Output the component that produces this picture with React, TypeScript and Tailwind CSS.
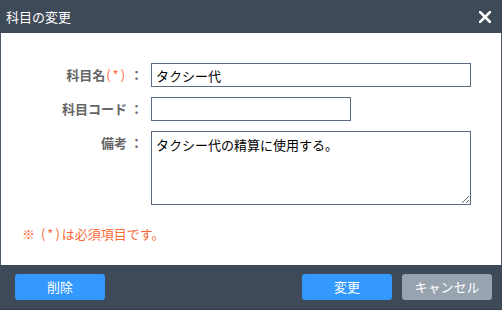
export default function App() {
  const font = { fontFamily: '"Noto Sans CJK JP", "Noto Sans", sans-serif' };
  return (
    <div
      className="flex h-[310px] w-[502px] flex-col bg-white text-[13px]"
      style={font}
    >
      <div className="flex h-[33px] items-center justify-between bg-[#3f4a58] pl-[6px] pr-[10px] text-white">
        <span className="text-[13px] leading-none">科目の変更</span>
        <svg width="12" height="12" viewBox="0 0 12 12" className="mr-[1px]">
          <path d="M1 1L11 11M11 1L1 11" stroke="white" strokeWidth="2.6" strokeLinecap="square" />
        </svg>
      </div>

      <div className="flex h-[232px] flex-col border-x border-[#4f5b69] pt-[30px]">
        <div className="flex h-[24px] items-center">
          <label className="w-[142px] text-right font-bold text-[#666]">
            科目名<span className="pl-[1px] font-normal tracking-[2px] text-[#ff6a3d]">(*)</span> ：
          </label>
          <input
            defaultValue="タクシー代"
            className="ml-[8px] h-[24px] w-[320px] border border-[#5c6b7b] px-[4px] text-[13px] text-black outline-none"
          />
        </div>
        <div className="mt-[10px] flex h-[24px] items-center">
          <label className="w-[142px] text-right font-bold text-[#666]">科目コード ：</label>
          <input className="ml-[8px] h-[24px] w-[200px] border border-[#5c6b7b] px-[4px] text-[13px] outline-none" />
        </div>
        <div className="mt-[10px] flex">
          <label className="mt-[2px] w-[142px] text-right font-bold text-[#666]">備考 ：</label>
          <textarea
            defaultValue="タクシー代の精算に使用する。"
            className="ml-[8px] h-[74px] w-[320px] border border-[#5c6b7b] px-[4px] pt-[3px] text-[13px] leading-[20px] text-black outline-none"
          />
        </div>
        <p className="mt-[19px] pl-[21px] text-[13px] text-[#fa6a38]">
          ※ <span className="pl-[3px] tracking-[2px]">(*)</span>は必須項目です。
        </p>
      </div>

      <div className="flex h-[45px] items-start border-b border-[#333c48] bg-[#3f4a58] pl-[15px] pr-[14px] pt-[9px]">
        <button className="h-[26px] w-[90px] rounded-[3px] bg-[#3399ff] text-[13px] text-white">削除</button>
        <button className="ml-auto h-[26px] w-[90px] rounded-[3px] bg-[#3399ff] text-[13px] text-white">変更</button>
        <button className="ml-[10px] mr-[-4px] h-[26px] w-[90px] rounded-[3px] bg-[#98a3b0] text-[13px] text-white">キャンセル</button>
      </div>
    </div>
  );
}
